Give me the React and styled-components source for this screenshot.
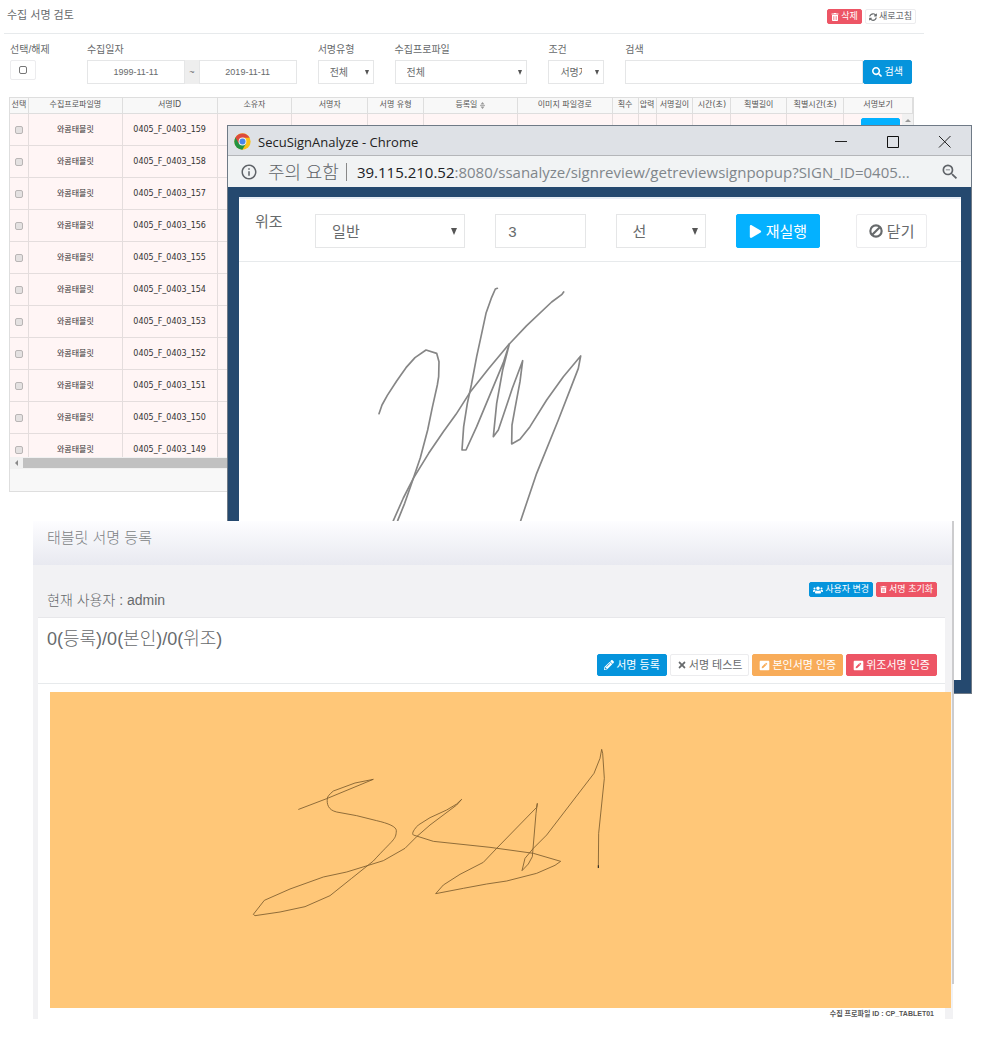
import React from "react";
import styled, { createGlobalStyle, css } from "styled-components";
import {
  FaTrashAlt,
  FaSyncAlt,
  FaSearch,
  FaPlay,
  FaUsers,
  FaPencilAlt,
  FaTimes,
  FaPenSquare,
} from "react-icons/fa";
import { MdInfoOutline, MdOutlineZoomOut } from "react-icons/md";

const GlobalStyle = createGlobalStyle`
  *, *::before, *::after { box-sizing: border-box; }
  body {
    margin: 0;
    background: #fff;
    color: #676a6c;
    font-family: "Liberation Sans", "Noto Sans CJK KR", sans-serif;
    font-size: 10px;
    line-height: 16px;
  }
  button, input, select { font-family: inherit; margin: 0; }
  h1, h2, h3, p { margin: 0; font-weight: 400; }
`;

/* The three windows share one grid cell and are offset by their margins. */
const Desktop = styled.div`
  display: grid;
  grid-template-columns: minmax(0, 1fr);
  align-items: start;
  padding-bottom: 23px;
  & > * {
    grid-area: 1 / 1;
    isolation: isolate;
  }
`;

/* ---------- shared controls ---------- */

const sizes = {
  xs: css`height: 15px; padding: 0 3px; font-size: 9px; gap: 2px;`,
  sm: css`height: 22px; padding: 0 6px; font-size: 11px; gap: 2px;`,
  md: css`height: 24px; padding: 0 8px; font-size: 10px; gap: 3px;`,
  lg: css`height: 34px; padding: 0 12px; font-size: 15px; gap: 4px;`,
};

const tones = {
  primary: css`background: #0594dc; border-color: #0594dc; color: #fff;`,
  info: css`background: #04b1ff; border-color: #04b1ff; color: #fff;`,
  danger: css`background: #ed5565; border-color: #ed5565; color: #fff;`,
  warning: css`background: #f8ac59; border-color: #f8ac59; color: #fff;`,
  plain: css`background: #fff; border-color: #ececee; color: #676a6c;`,
};

const Button = styled.button`
  display: inline-flex;
  align-items: center;
  justify-content: center;
  border: 1px solid;
  border-radius: 2px;
  white-space: nowrap;
  line-height: 1;
  cursor: pointer;
  ${(p) => sizes[p.$size]}
  ${(p) => tones[p.$tone]}
  svg { flex: none; }
`;

const ViewButton = styled(Button)`
  display: flex;
  width: 39px;
  padding: 0;
  margin-left: 17px;
`;

const fieldHeight = { sm: 24, lg: 34 };

const Field = styled.input`
  width: 100%;
  min-width: 0;
  height: ${(p) => fieldHeight[p.$size]}px;
  border: 1px solid #e5e6e7;
  background: #fff;
  color: #676a6c;
  padding: 0 ${(p) => (p.$size === "lg" ? 12 : 6)}px;
  font-size: ${(p) => (p.$size === "lg" ? 15 : 9)}px;
  text-align: ${(p) => p.$align || "left"};
  outline: none;
`;

const SelectFrame = styled.div`
  position: relative;
  &::after {
    content: "";
    position: absolute;
    right: ${(p) => (p.$size === "lg" ? 8 : 5)}px;
    top: ${(p) => (p.$size === "lg" ? 14 : 10)}px;
    border: solid transparent;
    border-width: ${(p) => (p.$size === "lg" ? "7px 3px 0" : "5px 2px 0")};
    border-top-color: #555;
    pointer-events: none;
  }
`;

const SelectBox = styled.select`
  appearance: none;
  display: block;
  width: 100%;
  height: ${(p) => fieldHeight[p.$size]}px;
  border: 1px solid #e5e6e7;
  border-radius: 0;
  background: #fff;
  color: #676a6c;
  padding: 0 ${(p) => (p.$size === "lg" ? "24px 0 16px" : "21px 0 11px")};
  font-size: ${(p) => (p.$size === "lg" ? 15 : 10)}px;
  outline: none;
`;

function Select({ size, id, label, options }) {
  return (
    <SelectFrame $size={size}>
      <SelectBox $size={size} id={id} aria-label={label}>
        {options.map((o) => (
          <option key={o}>{o}</option>
        ))}
      </SelectBox>
    </SelectFrame>
  );
}

const Cell = styled.div`
  grid-column: span ${(p) => p.$span};
  min-width: 0;
`;

/* ---------- review page ---------- */

const ReviewPage = styled.main`
  margin-right: 58px;
`;

const PageHead = styled.header`
  display: flex;
  align-items: center;
  justify-content: space-between;
  height: 34px;
  margin-left: 4px;
  padding: 0 8px 0 3px;
  border-bottom: 1px solid #e7eaec;
`;

const PageTitle = styled.h1`
  font-size: 11px;
  line-height: 16px;
  padding-bottom: 3px;
`;

const Actions = styled.div`
  display: flex;
  gap: 3px;
`;

const Filters = styled.form`
  display: grid;
  grid-template-columns: repeat(12, minmax(0, 1fr));
  column-gap: 21px;
  padding: 8px 12px 0 10px;
`;

const Label = styled.label`
  display: block;
  height: 18px;
  font-size: 10px;
  line-height: 16px;
  white-space: nowrap;
`;

const CheckFrame = styled.div`
  display: flex;
  align-items: center;
  justify-content: center;
  width: 26px;
  height: 20px;
  border: 1px solid #ececee;
  border-radius: 2px;
`;

const Check = styled.input`
  appearance: none;
  display: block;
  width: 8px;
  height: 8px;
  margin: 0 auto;
  border: 1px solid ${(p) => (p.$row ? "#b9b5b5" : "#777")};
  border-radius: 2px;
  background: ${(p) => (p.$row ? "#e4e1e1" : "#fff")};
`;

const Joined = styled.div`
  display: flex;
`;

const Tilde = styled.span`
  flex: 0 0 14px;
  background: #eee;
  text-align: center;
  font-size: 9px;
  line-height: 24px;
`;

const GridBox = styled.section`
  position: relative;
  margin: 13px 10px 0 9px;
  border: 1px solid #dedede;
`;

const Viewport = styled.div`
  height: 359px;
  overflow: hidden;
`;

const Table = styled.table`
  width: 100%;
  table-layout: fixed;
  border-collapse: separate;
  border-spacing: 0;
  font-family: "DejaVu Sans", "Noto Sans CJK KR", sans-serif;
  font-size: 8px;
  line-height: 12px;
  text-align: center;
`;

const Th = styled.th`
  height: 16px;
  padding: 0 0 2px;
  background: #f8f8f8;
  border-right: 1px solid #dedede;
  border-bottom: 1px solid #dedede;
  color: #555;
  font-weight: 400;
  white-space: nowrap;
`;

const SortMark = styled.svg`
  width: 5px;
  height: 7px;
  margin-left: 3px;
  vertical-align: -2px;
`;

const Td = styled.td`
  height: 32px;
  padding: 0;
  background: #fff5f5;
  border-right: 1px solid #e4dddd;
  border-bottom: 1px solid #e4dddd;
  color: #333;
  white-space: nowrap;
`;

const ScrollUp = styled.div`
  position: absolute;
  top: 16px;
  right: 0;
  width: 11px;
  height: 342px;
  padding: 5px 3px;
  background: #f1f1f1;
  &::before {
    content: "";
    display: block;
    border: solid transparent;
    border-width: 0 3px 3px;
    border-bottom-color: #999;
  }
`;

const ScrollRow = styled.div`
  display: flex;
  align-items: center;
  height: 12px;
  background: #f1f1f1;
  &::before {
    content: "";
    margin: 0 5px;
    border: solid transparent;
    border-width: 3px 3px 3px 0;
    border-right-color: #8a8a8a;
  }
`;

const ScrollThumb = styled.div`
  flex: 1;
  height: 10px;
  background: #c1c1c1;
`;

const Pager = styled.div`
  height: 22px;
  background: #f8f8f8;
`;

const columns = [
  ["선택", 19],
  ["수집프로파일명", 94],
  ["서명ID", 95],
  ["소유자", 75],
  ["서명자", 76],
  ["서명 유형", 56],
  ["등록일", 94],
  ["이미지 파일경로", 95],
  ["획수", 26],
  ["압력", 18],
  ["서명길이", 37],
  ["시간(초)", 38],
  ["획별길이", 56],
  ["획별시간(초)", 57],
  ["서명보기", 69],
];
const totalWidth = columns.reduce((sum, c) => sum + c[1], 0);
const signIds = [159, 158, 157, 156, 155, 154, 153, 152, 151, 150, 149].map(
  (n) => `0405_F_0403_${n}`
);

function SignTable() {
  return (
    <GridBox>
      <Viewport>
        <Table>
          <colgroup>
            {columns.map(([name, w]) => (
              <col key={name} style={{ width: `${(w / totalWidth) * 100}%` }} />
            ))}
          </colgroup>
          <thead>
            <tr>
              {columns.map(([name]) => (
                <Th key={name} scope="col">
                  {name}
                  {name === "등록일" && (
                    <SortMark viewBox="0 0 10 14" aria-hidden="true">
                      <path d="M5 0 9 5H1ZM0 6.500H10V8H0ZM5 14 9 9H1Z" fill="#999" />
                    </SortMark>
                  )}
                </Th>
              ))}
            </tr>
          </thead>
          <tbody>
            {signIds.map((id) => (
              <tr key={id}>
                <Td>
                  <Check $row type="checkbox" aria-label={id} />
                </Td>
                <Td>와콤태블릿</Td>
                <Td>{id}</Td>
                {columns.slice(3, 14).map(([name]) => (
                  <Td key={name} />
                ))}
                <Td>
                  <ViewButton $size="md" $tone="info" type="button" aria-label="서명보기">
                    <FaSearch size={10} />
                  </ViewButton>
                </Td>
              </tr>
            ))}
          </tbody>
        </Table>
      </Viewport>
      <ScrollUp />
      <ScrollRow>
        <ScrollThumb />
      </ScrollRow>
      <Pager />
    </GridBox>
  );
}

/* ---------- browser popup ---------- */

const Popup = styled.section`
  margin: 125px 10px 0 227px;
  border: 1px solid #6f7a86;
  background: #25496f;
`;

const TitleBar = styled.header`
  display: flex;
  align-items: center;
  height: 30px;
  padding: 2px 20px 0 6px;
  background: #dee1e6;
  border-bottom: 1px solid #b4b6b9;
  color: #222;
  font-family: "Open Sans", sans-serif;
`;

const WindowTitle = styled.h2`
  flex: 1;
  margin-left: 7px;
  font-size: 13px;
  line-height: 20px;
`;

const WindowButtons = styled.div`
  display: flex;
  gap: 39px;
`;

const WindowButton = styled.button`
  display: block;
  width: 13px;
  height: 13px;
  padding: 0;
  border: 0;
  background: none;
  svg { display: block; }
`;

const AddressBar = styled.div`
  display: flex;
  align-items: center;
  height: 31px;
  padding: 0 11px 0 12px;
  background: #f1f3f4;
  color: #5f6368;
  font-family: "Open Sans", "Noto Sans CJK KR", sans-serif;
  font-size: 15px;
  line-height: 24px;
  white-space: nowrap;
`;

const Warning = styled.span`
  margin-left: 10px;
  padding-right: 7px;
  font-size: 18px;
  font-weight: 300;
`;

const Divider = styled.span`
  width: 1px;
  height: 18px;
  background: #888;
`;

const Url = styled.span`
  flex: 1;
  min-width: 0;
  margin-left: 10px;
  color: #80868b;
  b { color: #202124; font-weight: 400; }
`;

const PopupBody = styled.div`
  margin: 10px 10px 13px 11px;
  border-top: 2px solid #e9eef5;
  background: #fff;
`;

const PopupTools = styled.form`
  display: grid;
  grid-template-columns: repeat(12, minmax(0, 1fr));
  column-gap: 30px;
  padding: 15px 15px 13px 16px;
  border-bottom: 1px solid #e7eaec;
`;

const PopupLabel = styled.label`
  font-size: 15px;
  line-height: 16px;
  white-space: nowrap;
`;

const Canvas = styled.div`
  min-height: 418px;
  padding: 8px 0 0 111px;
`;

const Drawing = styled.svg`
  display: block;
  width: ${(p) => p.$w}px;
  height: ${(p) => p.$h}px;
  fill: none;
  stroke-linejoin: round;
  stroke-linecap: round;
`;

function ChromeLogo() {
  return (
    <svg width="17" height="17" viewBox="0 0 48 48" aria-hidden="true">
      <circle cx="24" cy="24" r="23" fill="#fbc116" />
      <path d="M24 24 34 30 23.500 47A23 23 0 0 1 4 12.500Z" fill="#229342" />
      <path d="M4 12.500A23 23 0 0 1 44 13.500H24L14 30Z" fill="#dd4a3c" />
      <circle cx="24" cy="24" r="11" fill="#f4f4f4" />
      <circle cx="24" cy="24" r="8.500" fill="#4a86e8" />
    </svg>
  );
}

function BanIcon() {
  return (
    <svg width="14" height="14" viewBox="0 0 26 26" fill="none" stroke="currentColor" strokeWidth="4" aria-hidden="true">
      <circle cx="13" cy="13" r="10.500" />
      <path d="M5.500 20.500 20.500 5.500" />
    </svg>
  );
}

function ReviewPopup() {
  return (
    <Popup>
      <TitleBar>
        <ChromeLogo />
        <WindowTitle>SecuSignAnalyze - Chrome</WindowTitle>
        <WindowButtons>
          <WindowButton type="button" aria-label="최소화">
            <svg width="13" height="13" stroke="#222"><path d="M1 6.500H13" /></svg>
          </WindowButton>
          <WindowButton type="button" aria-label="최대화">
            <svg width="13" height="13" stroke="#111" fill="none"><path d="M1.500 1.500H12.500V12.500H1.500Z" /></svg>
          </WindowButton>
          <WindowButton type="button" aria-label="창 닫기">
            <svg width="13" height="13" stroke="#222"><path d="M1 1 12.500 12.500M12.500 1 1 12.500" /></svg>
          </WindowButton>
        </WindowButtons>
      </TitleBar>
      <AddressBar>
        <MdInfoOutline size={18} />
        <Warning>주의 요함</Warning>
        <Divider />
        <Url>
          <b>39.115.210.52</b>:8080/ssanalyze/signreview/getreviewsignpopup?SIGN_ID=0405...
        </Url>
        <MdOutlineZoomOut size={20} />
      </AddressBar>
      <PopupBody>
        <PopupTools>
          <Cell $span={1}>
            <PopupLabel htmlFor="forge-type">위조</PopupLabel>
          </Cell>
          <Cell $span={3}>
            <Select size="lg" id="forge-type" options={["일반"]} />
          </Cell>
          <Cell $span={2}>
            <Field $size="lg" aria-label="굵기" defaultValue="3" />
          </Cell>
          <Cell $span={2}>
            <Select size="lg" label="표시 방식" options={["선"]} />
          </Cell>
          <Cell $span={2}>
            <Button $size="lg" $tone="info" type="button">
              <FaPlay size={13} />
              재실행
            </Button>
          </Cell>
          <Cell $span={2}>
            <Button $size="lg" $tone="plain" type="button">
              <BanIcon />
              닫기
            </Button>
          </Cell>
        </PopupTools>
        <Canvas>
          <Drawing $w={260} $h={260} viewBox="0 0 780 780" stroke="#868686" strokeWidth="5" role="img" aria-label="서명">
            <path d="M87 431 96 405 112 376 140 333 168 293 195 263 228 240 260 250 267 275 266 320 262 345 247 412 233 480 211 563 185 640 164 700 143 752" />
            <path d="M130 752 160 684 190 625 236 550 280 485 318 433 360 367 415 297 475 225 530 167 605 96 636 73 641 66" />
            <path d="M442 55 436 57 425 82 408 130 393 200 380 260 364 345 352 400 341 470 336 540 348 540 380 470 430 350 460 278 478 222 458 300 440 400 430 500 445 480 461 433 487 355 518 272 510 335 495 415 486 465 485 522 510 508 540 470 590 390 640 320 692 258 685 295 665 347 625 450 560 610 512 752" />
          </Drawing>
        </Canvas>
      </PopupBody>
    </Popup>
  );
}

/* ---------- tablet registration panel ---------- */

const TabletPanel = styled.section`
  position: relative;
  margin: 521px 29px 0 33px;
  padding-right: 8px;
  background: #f2f2f4;
`;

const EdgeLine = styled.div`
  position: absolute;
  top: 0;
  right: -1px;
  bottom: 35px;
  width: 2px;
  background: #ccccce;
`;

const PanelTitle = styled.h2`
  height: 44px;
  margin-right: -8px;
  padding-left: 14px;
  background: linear-gradient(#fdfdff, #e8e9f0);
  color: #7c7f84;
  font-size: 15px;
  font-weight: 300;
  line-height: 34px;
`;

const UserRow = styled.div`
  display: flex;
  justify-content: space-between;
  align-items: flex-start;
  height: 52px;
  padding: 17px 8px 0 14px;
`;

const UserName = styled.p`
  padding-top: 7px;
  font-size: 14px;
  font-weight: 300;
  line-height: 22px;
`;

const Card = styled.div`
  margin-left: 5px;
  border-top: 1px solid #e7e7ea;
  background: #fff;
`;

const CardHead = styled.div`
  height: 66px;
  padding: 8px 8px 0 9px;
  border-bottom: 1px solid #e7eaec;
`;

const Counts = styled.h3`
  font-size: 18px;
  font-weight: 300;
  line-height: 26px;
`;

const CardActions = styled.div`
  display: flex;
  justify-content: flex-end;
  gap: 3px;
  padding-top: 2px;
`;

/* The signing surface runs past the card's right edge. */
const Surface = styled.div`
  position: relative;
  min-height: 316px;
  margin: 8px -6px 0 12px;
  padding: 38px 0 0 180px;
  background: #ffc778;
`;

const ProfileNote = styled.p`
  padding: 1px 11px 0 0;
  color: #555;
  font-size: 7px;
  font-weight: 700;
  line-height: 10px;
  text-align: right;
`;

function TabletRegister() {
  return (
    <TabletPanel>
      <PanelTitle>태블릿 서명 등록</PanelTitle>
      <UserRow>
        <UserName>현재 사용자 : admin</UserName>
        <Actions>
          <Button $size="xs" $tone="primary" type="button">
            <FaUsers size={10} />
            사용자 변경
          </Button>
          <Button $size="xs" $tone="danger" type="button">
            <FaTrashAlt size={7} />
            서명 초기화
          </Button>
        </Actions>
      </UserRow>
      <Card>
        <CardHead>
          <Counts>0(등록)/0(본인)/0(위조)</Counts>
          <CardActions>
            <Button $size="sm" $tone="primary" type="button">
              <FaPencilAlt size={10} />
              서명 등록
            </Button>
            <Button $size="sm" $tone="plain" type="button">
              <FaTimes size={10} />
              서명 테스트
            </Button>
            <Button $size="sm" $tone="warning" type="button">
              <FaPenSquare size={11} />
              본인서명 인증
            </Button>
            <Button $size="sm" $tone="danger" type="button">
              <FaPenSquare size={11} />
              위조서명 인증
            </Button>
          </CardActions>
        </CardHead>
        <Surface>
          <Drawing $w={400} $h={200} viewBox="0 0 1200 600" stroke="#7a5a2c" strokeWidth="2.500" role="img" aria-label="서명">
            <path d="M206 238 290 206 430 148 375 159 310 183Q292 198 292 205C290 222 294 240 320 246L380 257 440 272C475 280 499 290 499 302C498 330 490 327 430 393L365 445 300 497 225 530 150 546 75 557 70 553 103 511 180 477 280 441 350 426 415 406 460 392 525 355 560 320 600 285 680 225 695 208 680 222 650 240 600 263 565 285C553 297 544 310 550 315L610 334 780 352 910 370 992 394 975 406 920 430 830 453 770 462 700 475 617 491 640 465 690 433 760 397 800 355 920 232 922 220 918 250 907 380 895 402 876 422 885 385 910 355 950 315 1092 130 1110 85 1115 58 1118 70 1123 145 1106 310 1105 412" />
            <path d="M1105 407V413" stroke="#222" strokeWidth="3" />
          </Drawing>
        </Surface>
        <ProfileNote>수집 프로파일 ID : CP_TABLET01</ProfileNote>
      </Card>
      <EdgeLine />
    </TabletPanel>
  );
}

export default function App() {
  return (
    <>
      <GlobalStyle />
      <Desktop>
        <ReviewPage>
          <PageHead>
            <PageTitle>수집 서명 검토</PageTitle>
            <Actions>
              <Button $size="xs" $tone="danger" type="button">
                <FaTrashAlt size={8} />
                삭제
              </Button>
              <Button $size="xs" $tone="plain" type="button">
                <FaSyncAlt size={8} />
                새로고침
              </Button>
            </Actions>
          </PageHead>
          <Filters>
            <Cell $span={1}>
              <Label htmlFor="select-all">선택/해제</Label>
              <CheckFrame>
                <Check type="checkbox" id="select-all" />
              </CheckFrame>
            </Cell>
            <Cell $span={3}>
              <Label htmlFor="date-from">수집일자</Label>
              <Joined>
                <Field $size="sm" $align="center" id="date-from" defaultValue="1999-11-11" />
                <Tilde>~</Tilde>
                <Field $size="sm" $align="center" aria-label="종료일" defaultValue="2019-11-11" />
              </Joined>
            </Cell>
            <Cell $span={1}>
              <Label htmlFor="sign-type">서명유형</Label>
              <Select size="sm" id="sign-type" options={["전체"]} />
            </Cell>
            <Cell $span={2}>
              <Label htmlFor="profile">수집프로파일</Label>
              <Select size="sm" id="profile" options={["전체"]} />
            </Cell>
            <Cell $span={1}>
              <Label htmlFor="condition">조건</Label>
              <Select size="sm" id="condition" options={["서명자"]} />
            </Cell>
            <Cell $span={4}>
              <Label htmlFor="keyword">검색</Label>
              <Joined>
                <Field $size="sm" id="keyword" defaultValue="" />
                <Button $size="md" $tone="primary" type="button">
                  <FaSearch size={10} />
                  검색
                </Button>
              </Joined>
            </Cell>
          </Filters>
          <SignTable />
        </ReviewPage>
        <ReviewPopup />
        <TabletRegister />
      </Desktop>
    </>
  );
}
